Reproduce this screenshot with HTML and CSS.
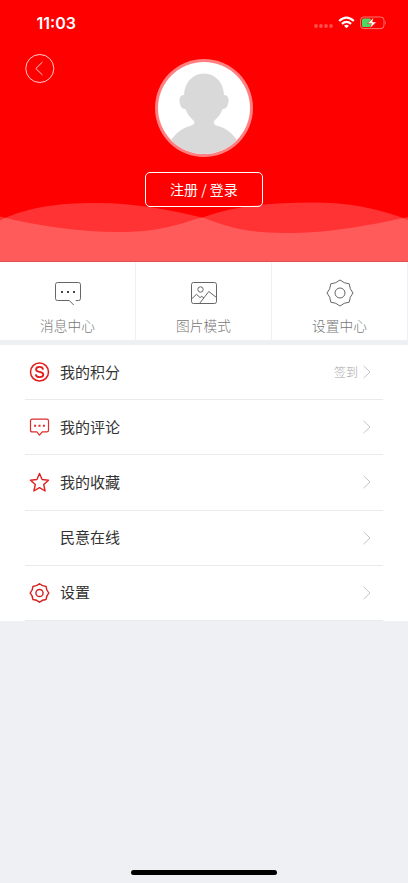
FILE: index.html
```html
<!DOCTYPE html>
<html lang="zh-CN">
<head>
    <meta charset="UTF-8">
    <meta name="viewport" content="width=device-width, initial-scale=1.0">
    <title>个人中心</title>
    <link rel="stylesheet" href="styles.css">
</head>
<body>

    <header class="header">
        <!-- 波浪背景 -->
        <svg class="waves" viewBox="0 0 408 60" preserveAspectRatio="none">
            <path d="M0 19.5 C28 6 58 2 96 2 C137 2 170 9 204 17 C226 25 244 32 285 32 C333 32 370 24 408 16 V60 H0 Z"/>
            <path d="M0 15.5 C38 25 78 31 120 31 C164 31 180 22 204 16 C235 5 270 1.500 312 1.500 C348 1.500 378 7 408 19 V60 H0 Z"/>
        </svg>

        <div class="status-bar">
            <span class="time">11:03</span>
            <div class="status-icons">
                <svg width="20" height="6" viewBox="0 0 20 6" fill="#fff" opacity=".3">
                    <circle cx="3" cy="3" r="1.900"/>
                    <circle cx="8" cy="3" r="1.900"/>
                    <circle cx="13" cy="3" r="1.900"/>
                    <circle cx="18" cy="3" r="1.900"/>
                </svg>
                <svg class="wifi" width="17" height="13" viewBox="0 0 17 13" fill="none" stroke="#fff" stroke-width="2.300">
                    <path d="M1.200 5 Q8.500 -1.800 15.800 5"/>
                    <path d="M3.900 7.900 Q8.500 3.800 13.100 7.900"/>
                    <path d="M8.500 12.300 L6 9.800 Q8.500 7.800 11 9.800 Z" fill="#fff" stroke="none"/>
                </svg>
                <svg width="27" height="14" viewBox="0 0 27 14">
                    <rect x=".5" y="1" width="23.500" height="11.600" rx="3.200" fill="none" stroke="#fff" stroke-opacity=".45"/>
                    <rect x="2" y="2.500" width="9" height="8.600" rx="1.500" fill="#4cd964"/>
                    <path d="M25.200 4.800 Q26.600 6.800 25.200 8.800 Z" fill="#fff" opacity=".5"/>
                    <path d="M13.500 1.500 L7.500 7.600 H11.400 L10 12.300 L16.500 5.900 H12.600 Z" fill="#fff" stroke="#f00" stroke-width=".5"/>
                </svg>
            </div>
        </div>

        <a class="back" href="#">
            <svg width="30" height="30" viewBox="0 0 30 30" fill="none" stroke="#fff" stroke-width=".8">
                <circle cx="14.800" cy="15.500" r="14"/>
                <path d="M17.500 9 L10.800 15.500 L17.500 22"/>
            </svg>
        </a>

        <div class="profile">
            <svg class="avatar" width="98" height="98" viewBox="0 0 98 98">
                <clipPath id="face"><circle cx="49" cy="49" r="46"/></clipPath>
                <circle cx="49" cy="49" r="49" fill="#ff8080"/>
                <circle cx="49" cy="49" r="46" fill="#fff"/>
                <path clip-path="url(#face)" fill="#d9d9d9" d="M49 14.500 C60 14.500 68.500 23 69 36 C73.500 36 74.500 40 73 45 C72 49 70 50 67.500 50 C66 55 62.500 59 59 62 C58 65 60 66.500 63 67 C71 69 77 74 82 81 L84 98 H14 L16 81 C21 74 27 69 35 67 C38.500 66 40 65 39 62 C35.500 59 32 55 30.500 50 C28 50 26 49 25 45 C23.500 40 25 36 29 36 C29.500 23 38 14.500 49 14.500 Z"/>
            </svg>
            <a class="login-btn" href="#">注册 / 登录</a>
        </div>
    </header>

    <nav class="tabs">
        <a class="tab" href="#">
            <svg width="28" height="28" viewBox="0 0 28 28" fill="none" stroke="#666" stroke-width="1">
                <path d="M21.800 21.500 H24.500 Q26.500 21.500 26.500 19.500 V5.500 Q26.500 3.500 24.500 3.500 H3.500 Q1.500 3.500 1.500 5.500 V19.500 Q1.500 21.500 3.500 21.500 H15.300 L19.700 26"/>
                <path d="M7 13h2M13 13h2M19 13h2" stroke="#444" stroke-width="2"/>
            </svg>
            <span>消息中心</span>
        </a>
        <a class="tab" href="#">
            <svg width="28" height="28" viewBox="0 0 28 28" fill="none" stroke="#666" stroke-width="1">
                <rect x="1.500" y="3.500" width="25" height="21" rx="2"/>
                <circle cx="10.500" cy="10.500" r="2.700"/>
                <path d="M1.500 20 L6.500 15.300 L10 18.500 L11.800 17.500 L14 19 M9.500 24.500 L18.800 12.500 L26.500 18.500"/>
            </svg>
            <span>图片模式</span>
        </a>
        <a class="tab" href="#">
            <svg width="28" height="28" viewBox="0 0 28 28" fill="none" stroke="#666" stroke-width="1" stroke-linejoin="round">
                <path d="M27 14 Q23.500 17.900 23.200 23.200 Q17.900 23.500 14 27 Q10.100 23.500 4.800 23.200 Q4.500 17.900 1 14 Q4.500 10.100 4.800 4.800 Q10.100 4.500 14 1 Q17.900 4.500 23.200 4.800 Q23.500 10.100 27 14 Z"/>
                <circle cx="14" cy="14" r="5"/>
            </svg>
            <span>设置中心</span>
        </a>
    </nav>

    <ul class="menu">
        <li class="menu-item">
            <svg class="icon" viewBox="0 0 20 20" fill="none" stroke="#e31b1b" stroke-width="1.500">
                <circle cx="10" cy="10" r="9"/>
                <path stroke-width="1.800" d="M13.600 7.600 C13.300 5.700 11.900 4.900 10 4.900 C7.900 4.900 6.600 5.900 6.600 7.400 C6.600 9.100 8 9.500 10 9.900 C12.200 10.300 13.800 10.900 13.800 12.600 C13.800 14.300 12.200 15.200 10.100 15.200 C7.900 15.200 6.500 14.200 6.200 12.300"/>
            </svg>
            <span class="label">我的积分</span>
            <span class="extra">签到</span>
            <svg class="arrow" viewBox="0 0 9 14"><path d="M1.500 .8 L8 7 L1.500 13.200"/></svg>
        </li>
        <li class="menu-item">
            <svg class="icon" viewBox="0 0 20 20" fill="none" stroke="#e02b2b" stroke-width="1.200" stroke-linejoin="round">
                <path d="M2.700 2.200 H17.300 Q19 2.200 19 3.900 V13.200 Q19 14.900 17.300 14.900 H12.700 L10 18.200 L7.300 14.900 H2.700 Q1 14.900 1 13.200 V3.900 Q1 2.200 2.700 2.200 Z"/>
                <path d="M4.600 8.700h2M9 8.700h2M13.400 8.700h2" stroke-width="2"/>
            </svg>
            <span class="label">我的评论</span>
            <svg class="arrow" viewBox="0 0 9 14"><path d="M1.500 .8 L8 7 L1.500 13.200"/></svg>
        </li>
        <li class="menu-item">
            <svg class="icon" viewBox="0 0 20 20" fill="none" stroke="#e02020" stroke-width="1.400" stroke-linejoin="round">
                <path d="M10 1.400 L12.600 7.500 L19 8.200 L14.200 12.500 L15.600 19 L10 15.700 L4.400 19 L5.800 12.500 L1 8.200 L7.400 7.500 Z"/>
            </svg>
            <span class="label">我的收藏</span>
            <svg class="arrow" viewBox="0 0 9 14"><path d="M1.500 .8 L8 7 L1.500 13.200"/></svg>
        </li>
        <li class="menu-item">
            <span class="icon"></span>
            <span class="label">民意在线</span>
            <svg class="arrow" viewBox="0 0 9 14"><path d="M1.500 .8 L8 7 L1.500 13.200"/></svg>
        </li>
        <li class="menu-item">
            <svg class="icon" viewBox="0 0 28 28" fill="none" stroke="#d92020" stroke-width="2" stroke-linejoin="round">
                <path d="M27 14 Q23.500 17.900 23.200 23.200 Q17.900 23.500 14 27 Q10.100 23.500 4.800 23.200 Q4.500 17.900 1 14 Q4.500 10.100 4.800 4.800 Q10.100 4.500 14 1 Q17.900 4.500 23.200 4.800 Q23.500 10.100 27 14 Z"/>
                <circle cx="14" cy="14" r="5"/>
            </svg>
            <span class="label">设置</span>
            <svg class="arrow" viewBox="0 0 9 14"><path d="M1.500 .8 L8 7 L1.500 13.200"/></svg>
        </li>
    </ul>

    <div class="home-indicator"></div>

</body>
</html>
```
FILE: styles.css
```css
* {
    box-sizing: border-box;
}

body {
    margin: 0;
    min-height: 883px;
    display: flex;
    flex-direction: column;
    font-family: "Noto Sans CJK SC", sans-serif;
    background-color: #eff0f4;
    color: #333;
}

a {
    color: inherit;
    text-decoration: none;
}

svg {
    display: block;
    flex-shrink: 0;
}

.header {
    position: relative;
    height: 262px;
    background-color: #f00;
    border-bottom: 1px solid #e05050;
    color: #fff;
}

.waves {
    position: absolute;
    left: 0;
    bottom: 0;
    width: 100%;
    height: 60px;
    fill: rgba(255, 255, 255, 0.2);
}

.status-bar {
    display: flex;
    align-items: center;
    justify-content: space-between;
    height: 45px;
    padding: 0 21px 0 36.5px;
}

.time {
    font-family: Inter, sans-serif;
    font-size: 16px;
    font-weight: 600;
}

.status-icons {
    display: flex;
    align-items: center;
}

.status-icons svg:first-child {
    margin-top: 7px;
}

.wifi {
    margin: 0 5px 0 5px;
}

.back {
    position: absolute;
    top: 53px;
    left: 25px;
}

.profile {
    position: relative;
    display: flex;
    flex-direction: column;
    align-items: center;
    padding-top: 14.4px;
}

.login-btn {
    width: 118px;
    height: 35px;
    margin-top: 15px;
    border: 1px solid #fff;
    border-radius: 5px;
    font-size: 14px;
    line-height: 32px;
    text-align: center;
}

.tabs {
    display: flex;
    height: 78px;
    background-color: #fff;
}

.tab {
    flex: 1;
    display: flex;
    flex-direction: column;
    align-items: center;
    padding-top: 17px;
    border-right: 1px solid #eff0f4;
    color: #777;
    font-size: 13.7px;
    font-weight: 300;
    line-height: 20px;
}

.tab span {
    margin-top: 8px;
}

.menu {
    margin: 5px 0 0;
    padding: 0 25px;
    list-style: none;
    background-color: #fff;
}

.menu-item {
    display: flex;
    align-items: center;
    height: 55.2px;
    padding: 0 12px 0 4px;
    border-bottom: 1px solid #ebebeb;
}

.icon {
    width: 21px;
    height: 20px;
    flex-shrink: 0;
}

.label {
    flex: 1;
    margin-left: 10px;
    padding-bottom: 2px;
    font-size: 15px;
}

.extra {
    margin-right: 4px;
    padding-bottom: 2px;
    color: #a5a5a5;
    font-size: 12px;
    font-weight: 300;
}

.arrow {
    width: 9px;
    height: 14px;
    fill: none;
    stroke: #c0c0c0;
    stroke-width: 0.9;
}

.home-indicator {
    width: 146px;
    height: 5px;
    margin: auto auto 8px;
    border-radius: 3px;
    background-color: #000;
}
```
